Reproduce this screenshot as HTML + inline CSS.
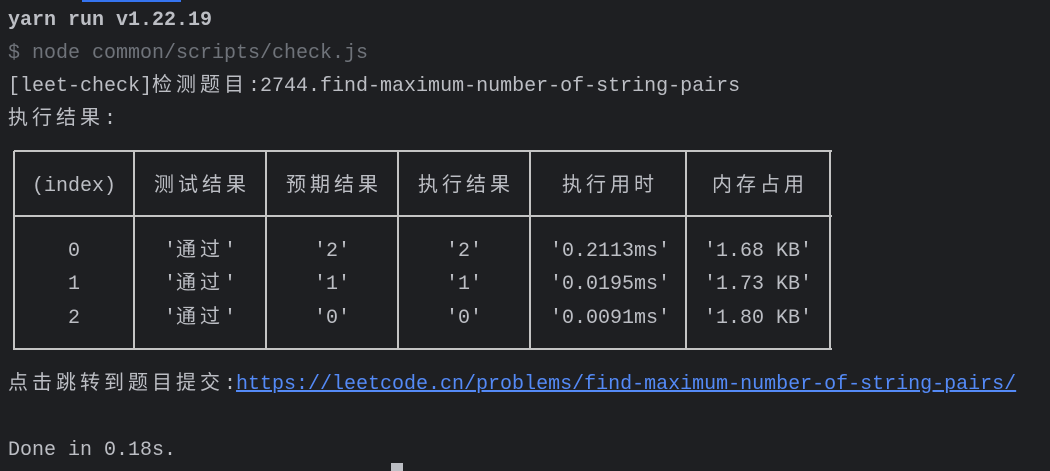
<!DOCTYPE html>
<html><head><meta charset="utf-8"><style>
html,body{margin:0;padding:0}
body{width:1050px;height:471px;background:#1e1f22;overflow:hidden;position:relative;font-family:"Liberation Mono","Noto Sans CJK SC",monospace;font-size:20px;color:#bcbec4}
.l{position:absolute;left:8px;height:33px;line-height:33px;white-space:pre}
.c{letter-spacing:4px}
.cc{letter-spacing:4px;margin-right:-4px}
.v{position:absolute;width:2px;background:#c4c4c4;top:151px;height:199px}
.h{position:absolute;height:2px;background:#c4c4c4;left:14px;width:818px}
.cell{position:absolute;height:33px;line-height:33px;text-align:center;white-space:pre}
a{color:#548af7;text-decoration:underline}
</style></head><body>
<div style="position:absolute;left:82px;top:0;width:99px;height:2px;background:#3574f0"></div>
<div class="l" style="top:4px;font-weight:bold">yarn run v1.22.19</div>
<div class="l" style="top:37px;color:#6f737a">$ node common/scripts/check.js</div>
<div class="l" style="top:70px">[leet-check]<span class="c">检测题目</span>:2744.find-maximum-number-of-string-pairs</div>
<div class="l" style="top:103px"><span class="c">执行结果</span>:</div>

<div class="h" style="top:150px"></div>
<div class="h" style="top:215px"></div>
<div class="h" style="top:348px"></div>
<div class="v" style="left:13px"></div>
<div class="v" style="left:133px"></div>
<div class="v" style="left:265px"></div>
<div class="v" style="left:397px"></div>
<div class="v" style="left:529px"></div>
<div class="v" style="left:685px"></div>
<div class="v" style="left:829px"></div>

<div class="cell" style="top:170px;left:14px;width:120px">(index)</div>
<div class="cell" style="top:170px;left:134px;width:132px"><span class="cc">测试结果</span></div>
<div class="cell" style="top:170px;left:266px;width:132px"><span class="cc">预期结果</span></div>
<div class="cell" style="top:170px;left:398px;width:132px"><span class="cc">执行结果</span></div>
<div class="cell" style="top:170px;left:530px;width:156px"><span class="cc">执行用时</span></div>
<div class="cell" style="top:170px;left:686px;width:144px"><span class="cc">内存占用</span></div>

<div class="cell" style="top:235px;left:14px;width:120px">0</div>
<div class="cell" style="top:268px;left:14px;width:120px">1</div>
<div class="cell" style="top:302px;left:14px;width:120px">2</div>
<div class="cell" style="top:235px;left:134px;width:132px">'<span class="c">通过</span>'</div>
<div class="cell" style="top:268px;left:134px;width:132px">'<span class="c">通过</span>'</div>
<div class="cell" style="top:302px;left:134px;width:132px">'<span class="c">通过</span>'</div>
<div class="cell" style="top:235px;left:266px;width:132px">'2'</div>
<div class="cell" style="top:268px;left:266px;width:132px">'1'</div>
<div class="cell" style="top:302px;left:266px;width:132px">'0'</div>
<div class="cell" style="top:235px;left:398px;width:132px">'2'</div>
<div class="cell" style="top:268px;left:398px;width:132px">'1'</div>
<div class="cell" style="top:302px;left:398px;width:132px">'0'</div>
<div class="cell" style="top:235px;left:530px;width:160px">'0.2113ms'</div>
<div class="cell" style="top:268px;left:530px;width:160px">'0.0195ms'</div>
<div class="cell" style="top:302px;left:530px;width:160px">'0.0091ms'</div>
<div class="cell" style="top:235px;left:686px;width:144px">'1.68 KB'</div>
<div class="cell" style="top:268px;left:686px;width:144px">'1.73 KB'</div>
<div class="cell" style="top:302px;left:686px;width:144px">'1.80 KB'</div>

<div class="l" style="top:368px"><span class="c">点击跳转到题目提交</span>:<a>https://leetcode.cn/problems/find-maximum-number-of-string-pairs/</a></div>
<div class="l" style="top:434px">Done in 0.18s.</div>
<div style="position:absolute;left:391px;top:463px;width:12px;height:8px;background:#bcbec4"></div>
</body></html>
